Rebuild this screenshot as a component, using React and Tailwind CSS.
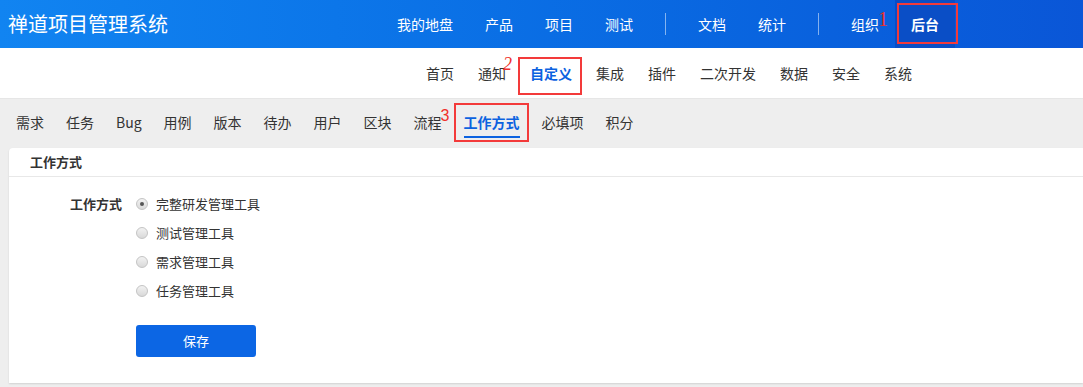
import React from 'react';

const font = { fontFamily: '"Noto Sans CJK SC", "Noto Sans", sans-serif' };

const topNav = ['我的地盘', '产品', '项目', '测试', '|', '文档', '统计', '|', '组织'];
const subNav = ['首页', '通知', '自定义', '集成', '插件', '二次开发', '数据', '安全', '系统'];
const moduleNav = ['需求', '任务', 'Bug', '用例', '版本', '待办', '用户', '区块', '流程', '工作方式', '必填项', '积分'];
const modes = ['完整研发管理工具', '测试管理工具', '需求管理工具', '任务管理工具'];

const Radio = ({ checked }) => (
  <span className="w-[12px] h-[12px] rounded-full border border-[#c4c4c4] bg-gradient-to-b from-[#f2f2f2] to-[#d9d9d9] flex items-center justify-center">
    {checked && <span className="w-[4px] h-[4px] rounded-full bg-[#555]" />}
  </span>
);

const Header = () => (
  <div className="h-[48px] bg-gradient-to-r from-[#1184f1] to-[#0a56d7] flex items-center text-white">
    <div className="pl-[8px] text-[20px] w-[381px]">禅道项目管理系统</div>
    <div className="flex items-center h-full text-[14px]">
      {topNav.map((item, i) =>
        item === '|' ? (
          <span key={i} className="w-px h-[22px] bg-white/50 mx-4" />
        ) : (
          <span key={i} className="relative h-full flex items-center px-4">
            {item}
            {item === '组织' && (
              <span className="absolute left-[43px] top-[9px] leading-[20px] text-[#f0302a] text-[20px] font-['Liberation_Serif']">1</span>
            )}
          </span>
        )
      )}
      <span className="relative h-full w-[60px] bg-[#0a4ec6] flex items-center justify-center font-bold">
        后台
        <span className="absolute left-[2px] top-[3px] w-[61px] h-[41px] border-2 border-[#f33a3a]" />
      </span>
    </div>
  </div>
);

const SubNav = () => (
  <div className="h-[50px] bg-white flex items-center pl-[414px] text-[14px] text-[#333]">
    {subNav.map((item) => (
      <span
        key={item}
        className={`relative h-full flex items-center px-3 ${item === '自定义' ? 'text-[#0c62e0] font-bold' : ''}`}
      >
        {item}
        {item === '通知' && (
          <span className="absolute left-[37px] top-[7px] leading-[18px] text-[#f0302a] text-[18px] italic font-['Liberation_Serif'] font-normal">2</span>
        )}
        {item === '自定义' && (
          <span className="absolute left-[0px] top-[9px] w-[64px] h-[38px] border-2 border-[#f33a3a]" />
        )}
      </span>
    ))}
  </div>
);

const ModuleNav = () => (
  <div className="h-[50px] flex items-center pl-[5px] text-[14px] text-[#333] border-t border-[#e6e6e6]">
    {moduleNav.map((item) => (
      <span
        key={item}
        className={`relative h-full flex items-center pb-[2px] px-[11px] ${item === '工作方式' ? 'text-[#0c62e0] font-bold' : ''}`}
      >
        {item}
        {item === '流程' && (
          <span className="absolute left-[38px] top-[9px] leading-[16px] text-[#f0302a] text-[16px] font-['Liberation_Sans'] font-normal">3</span>
        )}
        {item === '工作方式' && (
          <>
            <span className="absolute left-[11px] right-[11px] top-[37px] h-[2px] bg-[#0c62e0]" />
            <span className="absolute left-[1px] top-[4px] w-[75px] h-[39px] border-2 border-[#f33a3a]" />
          </>
        )}
      </span>
    ))}
  </div>
);

export default function App() {
  return (
    <div className="w-[1083px] h-[387px] bg-[#eeeeee] overflow-hidden" style={font}>
      <Header />
      <SubNav />
      <ModuleNav />
      <div className="ml-[9px] h-[235px] bg-white rounded-tl-[4px] shadow-[0_1px_2px_rgba(0,0,0,0.12)]">
        <div className="h-[29px] flex items-center pl-[21px] text-[13px] font-bold text-[#333] border-b border-[#e8e8e8]">
          工作方式
        </div>
        <div className="flex pt-[17px] text-[13px] text-[#333]">
          <div className="w-[113px] text-right font-bold leading-[20px]">工作方式</div>
          <div className="ml-[14px] flex flex-col">
            {modes.map((m, i) => (
              <label key={m} className="h-[29px] flex items-start">
                <span className="h-[20px] flex items-center">
                  <Radio checked={i === 0} />
                </span>
                <span className="ml-[8px] leading-[20px]">{m}</span>
              </label>
            ))}
            <button className="mt-[15px] w-[120px] h-[32px] rounded-[3px] bg-[#0c66e4] text-white text-[13px]">
              保存
            </button>
          </div>
        </div>
      </div>
    </div>
  );
}
